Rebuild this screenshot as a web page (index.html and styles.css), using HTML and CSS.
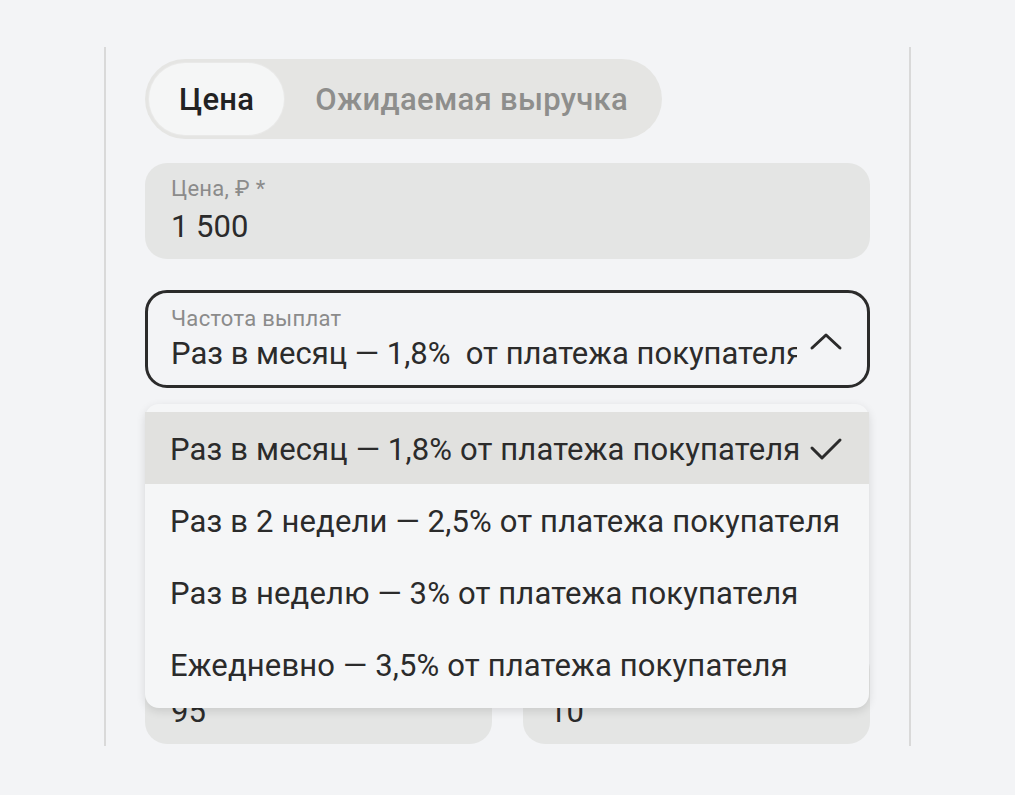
FILE: index.html
```html
<!DOCTYPE html>
<html lang="ru">

<head>
    <meta charset="UTF-8">
    <meta name="viewport" content="width=device-width, initial-scale=1.0">
    <title>Рассрочка</title>
    <link rel="stylesheet" href="styles.css">
</head>

<body>
    <div class="panel">
        <div class="tabs">
            <span class="tab active">Цена</span>
            <span class="tab">Ожидаемая выручка</span>
        </div>

        <div class="field">
            <span class="label">Цена, ₽ *</span>
            <span class="value">1 500</span>
        </div>

        <div class="select-wrap">
            <div class="field select">
                <span class="label">Частота выплат</span>
                <span class="value">Раз в месяц — 1,8%&nbsp; от платежа покупателя</span>
                <svg class="chevron" width="34" height="20" viewBox="0 0 34 20">
                    <path d="M3 17 L17 4 L31 17" fill="none" stroke="#2b2b2b" stroke-width="3" stroke-linecap="round" stroke-linejoin="round" />
                </svg>
            </div>
            <ul class="menu">
                <li class="selected">
                    <span>Раз в месяц — 1,8% от платежа покупателя</span>
                    <svg width="34" height="26" viewBox="0 0 34 26">
                        <path d="M3 12 L13 22 L31 4" fill="none" stroke="#2b2b2b" stroke-width="3" stroke-linecap="round" stroke-linejoin="round" />
                    </svg>
                </li>
                <li><span>Раз в 2 недели — 2,5% от платежа покупателя</span></li>
                <li><span>Раз в неделю — 3% от платежа покупателя</span></li>
                <li><span>Ежедневно — 3,5% от платежа покупателя</span></li>
            </ul>
        </div>

        <div class="row">
            <div class="field short">
                <span class="value">95</span>
            </div>
            <div class="field short">
                <span class="value">10</span>
            </div>
        </div>
    </div>
</body>

</html>
```

FILE: styles.css
```css
* {
    margin: 0;
    padding: 0;
    box-sizing: border-box;
    list-style: none;
}

body {
    background-color: #f3f4f6;
    font-family: Roboto, "Noto Sans", sans-serif;
    color: #2b2b2b;
    height: 795px;
    overflow: hidden;
}

.panel {
    margin: 47px 0 0 104px;
    width: 807px;
    height: 699px;
    border-left: 2px solid #d9d9d9;
    border-right: 2px solid #d9d9d9;
    padding: 12px 39px 0 39px;
    overflow: hidden;
}

.tabs {
    display: inline-flex;
    align-items: center;
    height: 80px;
    padding: 4px;
    border-radius: 40px;
    background-color: #e5e5e3;
}

.tab {
    display: flex;
    align-items: center;
    height: 72px;
    padding: 0 30px 0 31px;
    font-size: 31px;
    font-weight: 500;
    color: #8e8e8c;
    letter-spacing: 0.3px;
}

.tab.active {
    padding: 0 30px;
    background-color: #f5f6f6;
    color: #222222;
    border-radius: 36px;
    box-shadow: 0 0 0 1px #e9e9e8;
}

.field {
    position: relative;
    display: flex;
    flex-direction: column;
    height: 96px;
    margin-top: 24px;
    padding: 13px 26px 0 26px;
    background-color: #e4e5e4;
    border-radius: 22px;
}

.label {
    font-size: 22px;
    line-height: 25px;
    color: #8b8b8b;
    letter-spacing: 0.3px;
}

.value {
    margin-top: 6px;
    font-size: 31px;
    line-height: 40px;
    color: #2b2b2b;
    white-space: nowrap;
}

.select-wrap {
    position: relative;
    margin-top: 31px;
}

.field.select {
    margin-top: 0;
    height: 98px;
    padding: 13px 70px 0 23px;
    background-color: transparent;
    border: 3px solid #2b2b2b;
    overflow: hidden;
}

.field.select .value {
    margin-top: 3px;
    overflow: hidden;
}

.chevron {
    position: absolute;
    right: 24px;
    top: 38px;
}

.menu {
    position: absolute;
    top: 114px;
    left: 0;
    width: 724px;
    padding: 8px 0;
    background-color: #f5f6f7;
    border-radius: 14px;
    box-shadow: 0 3px 10px rgba(0, 0, 0, 0.12);
    z-index: 2;
}

.menu li {
    display: flex;
    align-items: center;
    justify-content: space-between;
    height: 72px;
    padding: 2px 26px 0 25px;
    font-size: 31px;
    letter-spacing: 0.15px;
    white-space: nowrap;
}

.menu li.selected {
    background-color: #e1e1df;
}

.row {
    display: flex;
    gap: 31px;
    margin-top: 260px;
}

.row .field {
    flex: 1;
    margin-top: 0;
}

.field.short {
    padding-top: 38px;
}
```
